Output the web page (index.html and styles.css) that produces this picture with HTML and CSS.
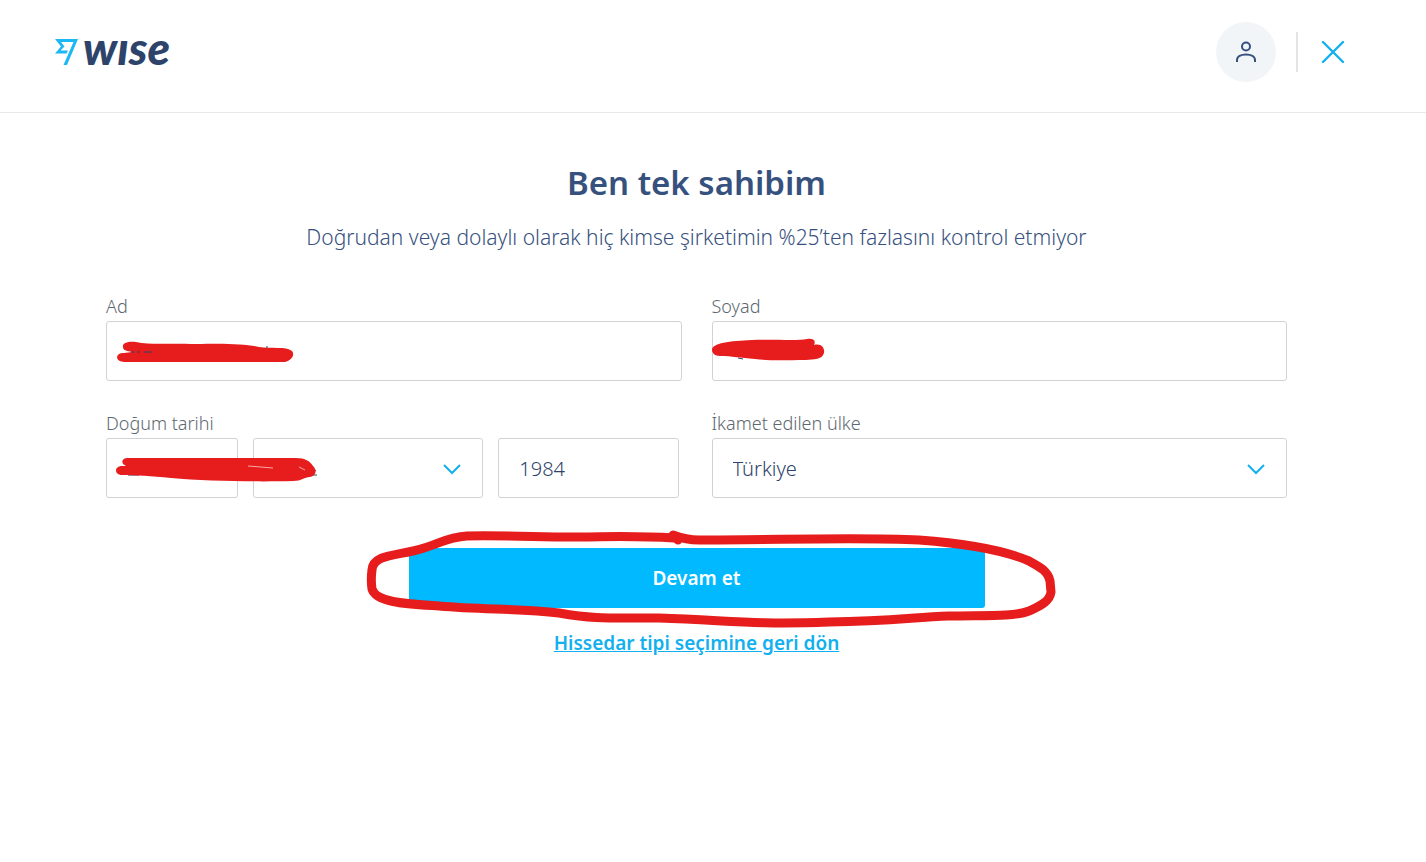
FILE: index.html
```html
<!DOCTYPE html>
<html lang="tr">

<head>
    <meta charset="utf-8">
    <meta name="viewport" content="width=device-width, initial-scale=1">
    <title>Wise</title>
    <link rel="stylesheet" href="styles.css">
</head>

<body>
    <header class="header">
        <a href="#" class="logo" aria-label="Wise">
            <svg width="120" height="34" viewBox="0 0 120 34">
                <path d="M0 4H23L12 30H8.500L18.500 7H6L9.500 11.500L5.500 15.500H13L11.500 18.500H0L6 11.500Z" fill="#1cb8f5" />
                <text x="28" y="30" class="logo-text">wıse</text>
            </svg>
        </a>
        <div class="header-actions">
            <button type="button" class="avatar" aria-label="Profil">
                <svg width="24" height="24" viewBox="0 0 24 24" fill="none" stroke="#37517e" stroke-width="2">
                    <circle cx="12" cy="6.500" r="4" />
                    <path d="M3 22V20C3 16.500 7 14.500 12 14.500S21 16.500 21 20V22" />
                </svg>
            </button>
            <span class="divider"></span>
            <button type="button" class="close" aria-label="Kapat">
                <svg width="24" height="24" viewBox="0 0 24 24" fill="none" stroke="#12b0ee" stroke-width="2.400" stroke-linecap="round">
                    <path d="M2 2L22 22M22 2L2 22" />
                </svg>
            </button>
        </div>
    </header>

    <main class="main">
        <h1>Ben tek sahibim</h1>
        <p class="lead">Doğrudan veya dolaylı olarak hiç kimse şirketimin %25’ten fazlasını kontrol etmiyor</p>

        <form class="form">
            <div class="grid">
                <div class="field">
                    <label for="ad">Ad</label>
                    <div class="control">
                        <input type="text" id="ad">
                        <svg class="marker" width="220" height="60" viewBox="0 0 220 60">
                            <path d="M17 26C16 22 22 20 30 21C45 24 60 22 90 23C120 22 140 23 153 26C165 28 180 25 186 30C190 35 183 41 177 41L20 41C9 42 8 32 18 32L26 31C20 30 17 29 17 26Z" />
                            <path class="ink" d="M25 31H28M31 31H34M38 31H46M160 26H162" />
                        </svg>
                    </div>
                </div>
                <div class="field">
                    <label for="soyad">Soyad</label>
                    <div class="control">
                        <input type="text" id="soyad">
                        <svg class="marker" width="220" height="60" viewBox="0 0 220 60">
                            <path class="ink" d="M26 37L31 38" />
                            <path d="M0 29C0 22 18 20 40 19C60 18 85 20 95 18C102 17 104 20 102 24C110 22 113 28 112 32C110 39 102 38 94 39C75 39 58 40 43 38C28 37 20 35 8 35C3 35 0 32 0 29Z" />
                        </svg>
                    </div>
                </div>
                <div class="field">
                    <label for="gun">Doğum tarihi</label>
                    <div class="control date">
                        <input type="text" id="gun" aria-label="Gün">
                        <div class="control">
                            <select aria-label="Ay">
                                <option></option>
                            </select>
                            <svg class="chevron" width="18" height="12" viewBox="0 0 18 12">
                                <path d="M1 1L9 9L17 1" />
                            </svg>
                        </div>
                        <input type="text" value="1984" aria-label="Yıl">
                        <svg class="marker" width="220" height="60" viewBox="0 0 220 60">
                            <path class="ink" d="M22 37H33M204 37H211M206 30L210 33" />
                            <path d="M17 26C15 22 18 20 22 20L190 20C199 20 204 23 207 28C212 33 209 38 204 39C198 39 196 43 187 43C150 44 100 43 65 40C45 38 30 37 16 37C8 37 8 28 16 28H20Z" />
                            <path class="glint" d="M142 28L167 30M193 29L199 32" />
                        </svg>
                    </div>
                </div>
                <div class="field">
                    <label for="ulke">İkamet edilen ülke</label>
                    <div class="control">
                        <select id="ulke">
                            <option>Türkiye</option>
                        </select>
                        <svg class="chevron" width="18" height="12" viewBox="0 0 18 12">
                            <path d="M1 1L9 9L17 1" />
                        </svg>
                    </div>
                </div>
            </div>

            <div class="submit">
                <button type="submit" class="btn">Devam et</button>
                <svg class="circle" width="700" height="110" viewBox="0 0 700 110">
                    <path d="M315 18C270 15 250 17 205 17C165 17 140 15 108 16C90 17 81 23 65 28C42 36 14 33 13 50C12 57 12 62 13 69C17 83 50 84 80 86C125 90 160 88 200 93C235 99 245 98 300 98C370 100 390 105 470 102C535 101 555 97 590 96C620 95 655 97 670 91C684 85 691 80 692 72L691 61C689 51 681 47 670 41C640 28 600 23 560 20C500 17 420 20 340 20C330 20 322 18 314 15L319 20" />
                </svg>
            </div>
            <a href="#" class="back">Hissedar tipi seçimine geri dön</a>
        </form>
    </main>
</body>

</html>
```
FILE: styles.css
```css
* {
    box-sizing: border-box;
}

body {
    margin: 0;
    background: #fff;
    color: #37517e;
    font-family: "Noto Sans", sans-serif;
    font-size: 18px;
    font-weight: 300;
}

button,
input,
select {
    font: inherit;
}

.header {
    display: flex;
    justify-content: space-between;
    align-items: flex-start;
    padding: 22px 81px 30px 55px;
    border-bottom: 1px solid #e6e8ea;
}

.logo {
    display: flex;
    padding-top: 13px;
}

.logo-text {
    font-family: Lato, sans-serif;
    font-size: 46px;
    font-weight: 900;
    font-style: italic;
    fill: #2e4369;
}

.header-actions {
    display: flex;
    align-items: center;
    gap: 20px;
}

.avatar {
    display: flex;
    align-items: center;
    justify-content: center;
    width: 60px;
    height: 60px;
    padding: 0;
    border: 0;
    border-radius: 50%;
    background: #f2f5f7;
    cursor: pointer;
}

.divider {
    width: 2px;
    height: 40px;
    background: #e2e5e8;
}

.close {
    display: flex;
    padding: 0 0 0 3px;
    border: 0;
    background: none;
    cursor: pointer;
}

.main {
    padding: 48px 139px 48px 106px;
    text-align: center;
}

h1 {
    margin: 0;
    font-size: 33px;
    font-weight: 600;
    line-height: 44px;
}

.lead {
    margin: 18px 0 0;
    font-size: 21px;
    line-height: 28px;
}

.form {
    padding-top: 43px;
}

.grid {
    display: grid;
    grid-template-columns: 1fr 1fr;
    gap: 30px;
    text-align: left;
}

.field label {
    display: block;
    height: 27px;
    font-size: 18px;
    line-height: 24px;
    color: #5d6870;
}

.control {
    position: relative;
}

.date {
    display: grid;
    grid-template-columns: 132fr 230fr 181fr;
    gap: 15px;
    padding-right: 2px;
}

input,
select {
    display: block;
    width: 100%;
    height: 60px;
    padding: 0 20px;
    border: 1px solid #d0d3d6;
    border-radius: 3px;
    background: #fff;
    color: #2e4369;
    font-size: 20px;
    appearance: none;
}

.chevron {
    position: absolute;
    top: 26px;
    right: 22px;
    fill: none;
    stroke: #12b0ee;
    stroke-width: 2;
    pointer-events: none;
}

.marker {
    position: absolute;
    top: 0;
    left: 0;
    fill: #e71d1d;
    pointer-events: none;
}

.marker .ink {
    fill: none;
    stroke: #2e4369;
    stroke-width: 1;
}

.marker .glint {
    fill: none;
    stroke: #f6a9a9;
    stroke-width: 1;
}

.submit {
    position: relative;
    max-width: 576px;
    margin: 50px auto 0;
}

.btn {
    display: block;
    width: 100%;
    height: 60px;
    border: 0;
    border-radius: 3px;
    background: #00b9ff;
    color: #fff;
    font-size: 19px;
    font-weight: 600;
    cursor: pointer;
}

.circle {
    position: absolute;
    top: -28px;
    left: -50px;
    fill: none;
    stroke: #e71d1d;
    stroke-width: 9;
    stroke-linejoin: round;
    stroke-linecap: round;
    pointer-events: none;
}

.back {
    display: inline-block;
    margin-top: 21px;
    color: #12b0ee;
    font-size: 19px;
    font-weight: 600;
    line-height: 28px;
}
```
